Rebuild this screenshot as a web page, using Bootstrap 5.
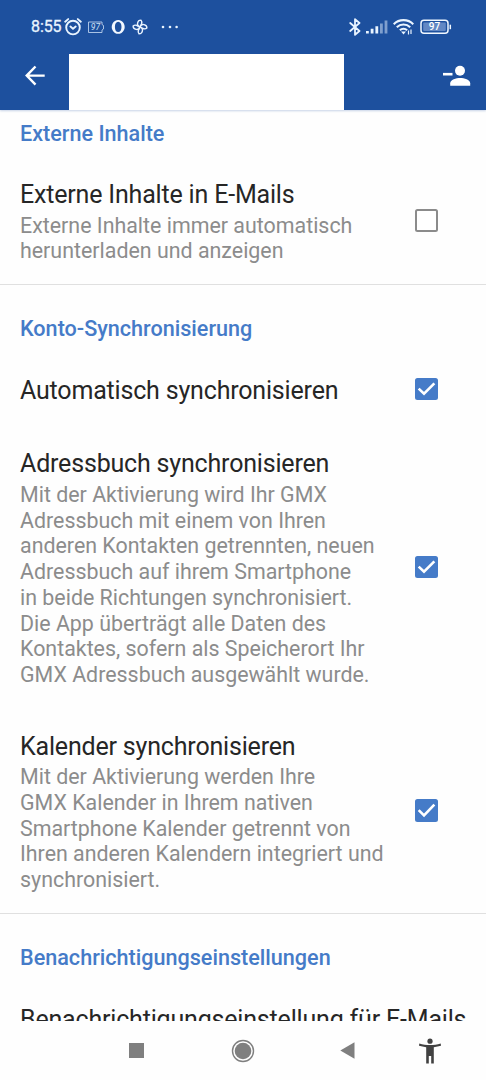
<!DOCTYPE html>
<html lang="de">
<head>
<meta charset="utf-8">
<meta name="viewport" content="width=device-width, initial-scale=1">
<title>Einstellungen</title>
<link rel="stylesheet" href="https://cdn.jsdelivr.net/npm/bootstrap@5.3.0/dist/css/bootstrap.min.css">
<style>
  body { font-family: Roboto, "Liberation Sans", sans-serif; background: #fefefe; color: #262626; }
  svg { display: block; flex: none; }
  .screen { height: 1080px; }
  .app-top { background: #1d509e; height: 110px; box-shadow: 0 1px 2px rgba(30, 80, 158, .25); z-index: 1; }
  .status { height: 54px; padding: 0 34px 0 31px; color: #e9f4ff; }
  .clock { font-size: 16px; line-height: 18px; font-weight: 400; width: 33px; letter-spacing: -.1px; -webkit-text-stroke: .3px #e9f4ff; }
  .toolbar { height: 56px; padding: 0 15px 0 25px; }
  .account { width: 275px; margin-left: 24px; background: #fff; }
  .section-title { font-size: 21.6px; line-height: 25.7px; font-weight: 500; color: #457bc8; padding: 31px 20px 12.3px; margin: 0; white-space: nowrap; }
  .section-title.first { padding-top: 10.5px; }
  .pref { padding: 21.7px 48.5px 22.3px 20px; white-space: nowrap; }
  .pref-last { padding-bottom: 20.3px; border-bottom: 1.5px solid #e0e0e0; }
  .pref-name { font-size: 25px; line-height: 29.3px; letter-spacing: -.18px; }
  .pref-text { font-size: 21.4px; line-height: 25.7px; color: #8c8c8c; margin-top: 3.3px; }
  .form-check-input.tick { width: 22.5px; height: 22.5px; margin: 0 0 3.6px; border: 2.2px solid #8b8b8b; border-radius: 2.5px; flex: none; background-color: #fff; }
  .form-check-input.tick:checked { background-color: #457bc8; border-color: #457bc8; background-size: 22.5px 22.5px; background-position: center;
    background-image: url("data:image/svg+xml,%3Csvg xmlns='http://www.w3.org/2000/svg' viewBox='0 0 22.5 22.5'%3E%3Cpath d='M3.6 10.8l5.2 5.2L18.9 5.5' fill='none' stroke='white' stroke-width='2.5'/%3E%3C/svg%3E"); }
  .sysnav { height: 59px; background: #fefefe; padding-left: 129px; }
  .nav-home { margin-left: 87px; }
  .nav-back { margin-left: 85px; }
  .nav-access { margin-left: 64px; }
</style>
</head>
<body>
<div class="screen d-flex flex-column overflow-hidden">
  <header class="app-top flex-shrink-0 position-relative">
    <div class="status d-flex align-items-center justify-content-between">
      <div class="d-flex align-items-center">
        <span class="clock">8:55</span>
        <svg width="18" height="18" viewBox="0 0 18 18" fill="none" stroke="#e9f4ff" stroke-width="1.9" stroke-linecap="round"><circle cx="9" cy="9.6" r="6.8"/><path d="M1.2 3.7L4.2 1.1M16.8 3.7l-3-2.6M6.4 8.5L9 10.7l2.7-2.2"/></svg>
        <svg class="ms-1" width="20" height="14" viewBox="-1 0 20 14" fill="none" stroke="#b9cfec" stroke-width=".9"><path d="M15 2H1.500V12.500H15M15 2V4.500L16.500 5.500V9L15 10V12.500"/><text x="3.800" y="10" font-size="8.500" font-family="Roboto, sans-serif" font-style="italic" fill="#cfe0f5" stroke="none">97</text></svg>
        <svg width="14" height="16" viewBox="0 0 14 16" style="margin-left:5px"><path fill="#f2f8ff" fill-rule="evenodd" d="M7.200 1a6.500 6.900 0 1 0 .01 0zM7.200 2.700c2.100 0 3.300 2.200 3.300 5.200s-1.200 5.200-3.300 5.200-3.300-2.200-3.300-5.200S5.100 2.700 7.200 2.700z"/></svg>
        <svg width="16" height="16" viewBox="0 0 16 16" fill="none" stroke="#e9f4ff" stroke-width="1.400" stroke-linejoin="round" style="margin-left:7px"><path id="blade" d="M8 8C6 7.500 5.300 5.800 5.600 4 5.900 2.300 7.200 1.100 9 1.100 10 2.200 10 3.700 9.500 5 9.200 6 8.600 7 8 8z"/><use href="#blade" transform="rotate(90 8 8)"/><use href="#blade" transform="rotate(180 8 8)"/><use href="#blade" transform="rotate(270 8 8)"/></svg>
        <svg width="18" height="4" viewBox="0 0 18 4" fill="#e9f4ff" style="margin-left:13px"><circle cx="2" cy="2" r="1.300"/><circle cx="9" cy="2" r="1.300"/><circle cx="15.600" cy="2" r="1.300"/></svg>
      </div>
      <div class="d-flex align-items-center">
        <svg width="12" height="18" viewBox="0 0 12 18" fill="none" stroke="#e9f4ff" stroke-width="1.800" stroke-linejoin="round" stroke-linecap="round"><path d="M1.200 5l9.300 8L6 16.800V1.200L10.500 5l-9.300 8"/></svg>
        <svg width="23" height="16" viewBox="0 0 23 16" fill="#e9f4ff" style="margin-left:5px"><path d="M0 12h2.800v2.500H0zM4.700 9.800h2.800v4.700H4.700zM9.400 7.200h2.800v7.300H9.400z"/><path fill="#7f9fce" d="M14 4.500h2.800v10H14zM18.600 1.500h2.800v13h-2.800z"/></svg>
        <svg width="21" height="18" viewBox="0 0 21 18" fill="none" stroke="#e9f4ff" stroke-width="2.100" style="margin-left:4px"><path d="M.7 6.200C6 .8 15 .8 20.300 6.200M3.800 9.300c3.700-3.700 9.700-3.700 13.400 0M6.900 12.300c2-2 5.200-2 7.200 0"/><path fill="#e9f4ff" stroke="none" d="M8 13.500h5l-2.500 3z"/><path stroke-width="1.200" d="M15.500 12.500v4M18 11.500v4.500"/></svg>
        <svg width="32" height="16" viewBox="0 0 32 16" style="margin-left:6px"><rect x="1" y="1.300" width="27" height="13" rx="3" fill="none" stroke="#f0f7ff" stroke-width="1.500"/><rect x="3.200" y="3.500" width="22.600" height="8.600" rx="1" fill="#6288c4"/><path d="M30.300 5.700v4.500" stroke="#f0f7ff" stroke-width="1.500"/><text x="14.500" y="11.400" font-size="10" font-weight="500" font-family="Roboto, sans-serif" text-anchor="middle" fill="#fff">97</text></svg>
      </div>
    </div>
    <div class="toolbar d-flex justify-content-between">
      <div class="d-flex">
        <svg class="mt-2" width="20" height="28" viewBox="0 0 20 28" fill="none" stroke="#fff" stroke-width="2.400"><path d="M10.500 4.500L1.700 13.600l8.800 9.100M1.700 13.600h18"/></svg>
        <div class="account"></div>
      </div>
      <svg class="mt-2" width="28" height="28" viewBox="0 0 28 28" fill="#fff"><path d="M0 10.900h9.500v2.600H0z"/><circle cx="17" cy="8.700" r="5"/><path d="M7.200 23.800v-2.600c0-3.400 6-5.200 10-5.200s10 1.800 10 5.200v2.600z"/></svg>
    </div>
  </header>

  <main class="flex-grow-1 overflow-hidden">
    <section>
      <h2 class="section-title first">Externe Inhalte</h2>
      <label class="pref pref-last d-flex align-items-center justify-content-between">
        <span>
          <span class="pref-name d-block">Externe Inhalte in E-Mails</span>
          <span class="pref-text d-block">Externe Inhalte immer automatisch<br>herunterladen und anzeigen</span>
        </span>
        <input class="form-check-input tick" type="checkbox">
      </label>
    </section>
    <section>
      <h2 class="section-title">Konto-Synchronisierung</h2>
      <label class="pref d-flex align-items-center justify-content-between">
        <span class="pref-name">Automatisch synchronisieren</span>
        <input class="form-check-input tick" type="checkbox" checked>
      </label>
      <label class="pref d-flex align-items-center justify-content-between">
        <span>
          <span class="pref-name d-block">Adressbuch synchronisieren</span>
          <span class="pref-text d-block">Mit der Aktivierung wird Ihr GMX<br>Adressbuch mit einem von Ihren<br>anderen Kontakten getrennten, neuen<br>Adressbuch auf ihrem Smartphone<br>in beide Richtungen synchronisiert.<br>Die App überträgt alle Daten des<br>Kontaktes, sofern als Speicherort Ihr<br>GMX Adressbuch ausgewählt wurde.</span>
        </span>
        <input class="form-check-input tick" type="checkbox" checked>
      </label>
      <label class="pref pref-last d-flex align-items-center justify-content-between">
        <span>
          <span class="pref-name d-block">Kalender synchronisieren</span>
          <span class="pref-text d-block">Mit der Aktivierung werden Ihre<br>GMX Kalender in Ihrem nativen<br>Smartphone Kalender getrennt von<br>Ihren anderen Kalendern integriert und<br>synchronisiert.</span>
        </span>
        <input class="form-check-input tick" type="checkbox" checked>
      </label>
    </section>
    <section>
      <h2 class="section-title">Benachrichtigungseinstellungen</h2>
      <div class="pref pe-0"><span class="pref-name d-block">Benachrichtigungseinstellung für E-Mails</span></div>
    </section>
  </main>

  <nav class="sysnav flex-shrink-0 d-flex align-items-center">
    <svg width="15" height="15" viewBox="0 0 15 15"><path fill="#7f7f7f" d="M0 0h15v15H0z"/></svg>
    <svg class="nav-home" width="24" height="24" viewBox="0 0 24 24"><circle cx="12" cy="12" r="10.500" fill="none" stroke="#7f7f7f" stroke-width="1.400"/><circle cx="12" cy="12" r="8.300" fill="#7f7f7f"/></svg>
    <svg class="nav-back" width="15" height="17" viewBox="0 0 15 17"><path fill="#7f7f7f" d="M14.500.3v16.400L.3 8.500z"/></svg>
    <svg class="nav-access" width="22" height="26" viewBox="0 0 22 26" fill="#414141"><circle cx="11" cy="3.200" r="2.600"/><path d="M.3 5.500C7 7.600 15 7.600 21.700 5.500l.3 2.300c-2.300.7-4.700 1.100-7.200 1.400v16.300h-2.600v-7.500H9.800v7.500H7.200V9.200C4.700 8.900 2.300 8.500 0 7.800z"/></svg>
  </nav>
</div>
<script src="https://cdn.jsdelivr.net/npm/bootstrap@5.3.0/dist/js/bootstrap.bundle.min.js"></script>
</body>
</html>
